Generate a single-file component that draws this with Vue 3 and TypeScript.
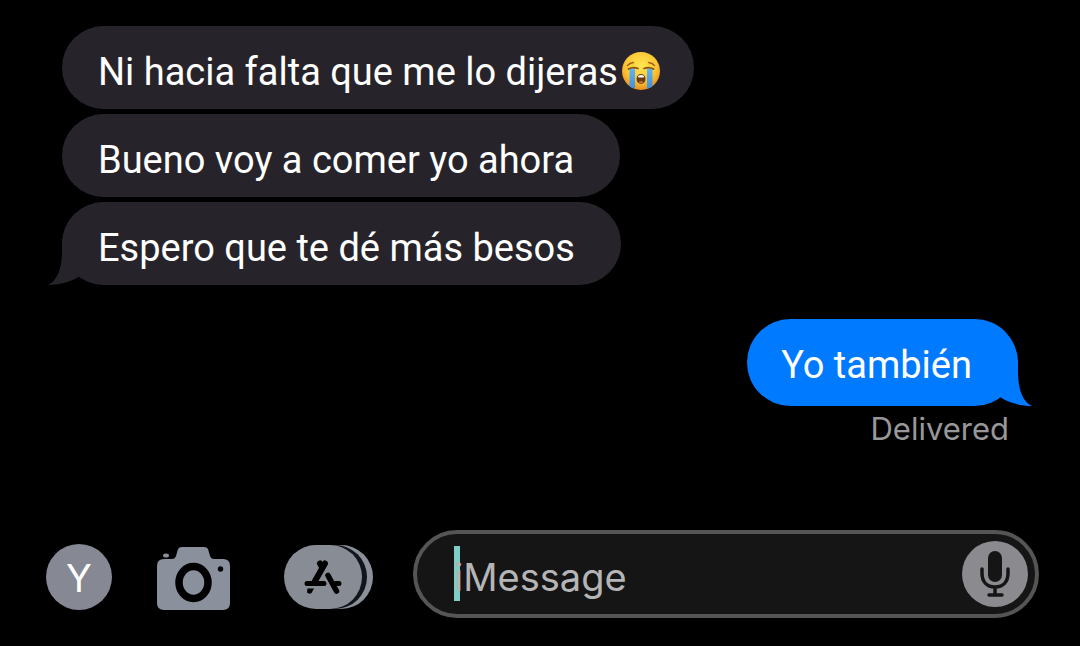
<script setup lang="ts">
import { ref } from 'vue'

interface Message {
  id: number
  text: string
  crying?: boolean
}

const received: Message[] = [
  { id: 1, text: 'Ni hacia falta que me lo dijeras', crying: true },
  { id: 2, text: 'Bueno voy a comer yo ahora' },
  { id: 3, text: 'Espero que te dé más besos' },
]
const sent: Message = { id: 4, text: 'Yo también' }
const draft = ref('')
</script>

<template>
  <main class="chat">
    <section class="thread" aria-label="Conversation">
      <div class="incoming">
        <p v-for="(m, i) in received" :key="m.id" class="bubble" :class="{ 'bubble-emoji': m.crying }">
          <span>{{ m.text }}</span>
          <svg v-if="m.crying" class="emoji" viewBox="0 0 38 38" role="img" aria-label="Loudly crying face">
            <defs>
              <radialGradient id="face" cx="50%" cy="36%" r="66%">
                <stop offset="0" stop-color="#ffe650" />
                <stop offset="0.6" stop-color="#fdc735" />
                <stop offset="1" stop-color="#e98a1c" />
              </radialGradient>
              <linearGradient id="tear" x1="0" y1="0" x2="0" y2="1">
                <stop offset="0" stop-color="#62b5f0" />
                <stop offset="1" stop-color="#3f8fdc" />
              </linearGradient>
              <clipPath id="head"><circle cx="19" cy="19" r="19" /></clipPath>
            </defs>
            <circle cx="19" cy="19" r="19" fill="url(#face)" />
            <g clip-path="url(#head)">
              <path d="M7.500 16.500h5.500v20H7.500zM25 16.500h5.500v20h-5.500z" fill="url(#tear)" />
            </g>
            <path d="M5.500 13.500Q7.500 11 11.500 10.500M32.500 13.500Q30.500 11 26.500 10.500" fill="none" stroke="#a8621a" stroke-width="1.500" stroke-linecap="round" />
            <path d="M6.500 17Q11 14.500 16 16.500M22 16.500Q27 14.500 31.500 17" fill="none" stroke="#8a5214" stroke-width="1.800" stroke-linecap="round" />
            <ellipse cx="19" cy="27" rx="4.500" ry="5" fill="#6b3a0d" />
            <path d="M16 24Q19 22 22 24L21.600 25.500H16.400Z" fill="#fff" />
            <path d="M16.500 30Q19 28 21.500 30Q19 33 16.500 30Z" fill="#b87333" />
          </svg>
          <svg v-if="i === received.length - 1" class="tail tail-left" viewBox="0 0 42 46" aria-hidden="true">
            <path d="M15 0V12C15 30 10 42 1 46C13 46 26 42 33 37L42 30V0Z" />
          </svg>
        </p>
      </div>

      <div class="outgoing">
        <p class="bubble bubble-sent">
          <span>{{ sent.text }}</span>
          <svg class="tail tail-right" viewBox="0 0 42 46" aria-hidden="true">
            <path d="M27 0V12C27 30 32 42 41 46C29 46 16 42 9 37L0 30V0Z" />
          </svg>
        </p>
        <small class="status">Delivered</small>
      </div>
    </section>

    <form class="composer" @submit.prevent>
      <div class="tools">
        <button type="button" class="avatar" aria-label="Profile">Y</button>
        <button type="button" class="camera" aria-label="Camera">
          <svg viewBox="0 0 73 64" aria-hidden="true">
            <path d="M7 13H15Q18 13 19 10L21 3Q22 1 25 1H47Q50 1 51 3L53 10Q54 13 57 13H66Q73 13 73 20V57Q73 64 66 64H7Q0 64 0 57V20Q0 13 7 13Z" fill="#8a919d" />
            <ellipse cx="9" cy="9.500" rx="3" ry="2" fill="#8a919d" />
            <ellipse cx="36.500" cy="36.500" rx="14.500" ry="16" fill="none" stroke="#000" stroke-width="7.500" />
            <circle cx="63.500" cy="23" r="2.700" fill="#000" />
          </svg>
        </button>
        <button type="button" class="apps" aria-label="Apps">
          <svg viewBox="0 0 90 64" aria-hidden="true">
            <rect x="10" width="79" height="64" rx="32" fill="#8b9099" />
            <rect x="4" width="79" height="64" rx="32" fill="#10161b" />
            <rect width="78" height="64" rx="32" fill="#888c95" />
            <g fill="none" stroke="#000" stroke-linecap="round">
              <path d="M41 18.500L31 36M36 18.500L38 22" stroke-width="6" />
              <path d="M23 38.500H40M51 38.500H55" stroke-width="5" />
              <path d="M44 30.500L52.500 46" stroke-width="5.500" />
            </g>
            <path d="M23.500 43.500H30L27.500 48Q25 49.500 23 47.500Z" fill="#000" />
          </svg>
        </button>
      </div>
      <div class="field">
        <span class="caret" aria-hidden="true"></span>
        <input v-model="draft" type="text" class="input" placeholder="iMessage" aria-label="iMessage" />
        <button type="button" class="mic" aria-label="Dictate">
          <svg viewBox="0 0 66 66" aria-hidden="true">
            <rect x="26" y="10" width="14" height="31" rx="7" fill="#151515" />
            <path d="M20 28V32C20 41 25 46 33 46S46 41 46 32V28M33 46V54M27 54H40" fill="none" stroke="#151515" stroke-width="3.500" stroke-linecap="round" />
          </svg>
        </button>
      </div>
    </form>
  </main>
</template>

<style>
html,
body {
  background: #000;
}
body {
  margin: 0;
}
</style>

<style scoped>
.chat {
  box-sizing: border-box;
  display: flex;
  flex-direction: column;
  justify-content: space-between;
  min-height: 100vh;
  padding: 26px 41px 28px 46px;
  background: #000;
  color: #fff;
  font-family: Inter, "Liberation Sans", sans-serif;
}
.thread {
  display: flex;
  flex-direction: column;
  gap: 34px;
  padding: 0 21px 0 16px;
}
.incoming {
  display: flex;
  flex-direction: column;
  align-items: flex-start;
  gap: 5px;
}
.outgoing {
  display: flex;
  flex-direction: column;
  align-items: flex-end;
  gap: 4px;
}
.bubble {
  position: relative;
  display: flex;
  align-items: center;
  gap: 4px;
  box-sizing: border-box;
  min-height: 83px;
  margin: 0;
  padding: 8px 46px 0 36px;
  border-radius: 44px;
  background: #26242a;
  font-family: Roboto, "Liberation Sans", sans-serif;
  font-size: 38px;
  line-height: 48px;
}
.bubble-emoji {
  padding-right: 34px;
}
.bubble-sent {
  min-height: 87px;
  padding: 4px 46px 0 34px;
  background: #007aff;
}
.emoji {
  width: 38px;
  height: 38px;
  margin-bottom: 2px;
}
.tail {
  position: absolute;
  bottom: 0;
  width: 42px;
  height: 46px;
}
.tail-left {
  left: -15px;
  fill: #26242a;
}
.tail-right {
  right: -15px;
  fill: #007aff;
}
.status {
  padding-right: 9px;
  color: #98989a;
  font-size: 31px;
  line-height: 38px;
}
.composer {
  display: flex;
  align-items: center;
}
.tools {
  display: flex;
  align-items: center;
  padding-top: 6px;
}
button {
  display: block;
  flex: none;
  margin: 0;
  padding: 0;
  border: 0;
  background: none;
  color: inherit;
  font: inherit;
}
button svg {
  display: block;
  width: 100%;
  height: 100%;
}
.avatar {
  width: 66px;
  height: 66px;
  margin-right: 45px;
  padding-top: 2px;
  border-radius: 50%;
  background: #868993;
  font-size: 38px;
  line-height: 64px;
}
.camera {
  align-self: flex-end;
  width: 73px;
  height: 64px;
  margin-right: 54px;
}
.apps {
  width: 90px;
  height: 64px;
  margin-right: 39px;
}
.field {
  position: relative;
  display: flex;
  flex: 1;
  align-items: center;
  box-sizing: border-box;
  min-width: 0;
  height: 88px;
  padding: 0 7px 0 37px;
  border: 4px solid #555;
  border-radius: 44px;
  background: #151515;
}
.caret {
  position: absolute;
  top: 12px;
  left: 37px;
  width: 6px;
  height: 55px;
  background: #7fcdc5;
}
.input {
  position: relative;
  flex: 1;
  min-width: 0;
  height: 56px;
  margin: 0;
  padding: 6px 0 0;
  border: 0;
  outline: 0;
  background: transparent;
  color: #fff;
  font: inherit;
  font-size: 38px;
  line-height: 48px;
}
.input::placeholder {
  color: #b5b5b7;
  opacity: 1;
}
.mic {
  width: 66px;
  height: 66px;
  border-radius: 50%;
  background: #8b8a8f;
}
</style>
